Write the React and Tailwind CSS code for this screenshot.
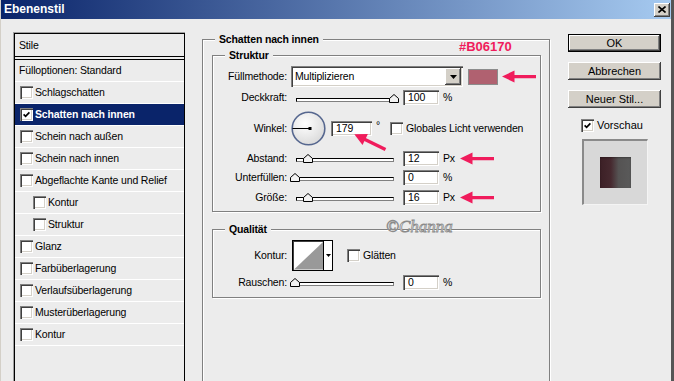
import React from 'react';

const RED = '#f01c5c';
const sunken =
  'shadow-[inset_1px_1px_0_#808080,inset_2px_2px_0_#404040,inset_-1px_-1px_0_#ffffff,inset_-2px_-2px_0_#d4d0c8]';
const raised =
  'shadow-[inset_-1px_-1px_0_#404040,inset_1px_1px_0_#ffffff,inset_-2px_-2px_0_#808080,inset_2px_2px_0_#d4d0c8]';

function Check({ checked = false }) {
  return (
    <span className={`flex h-[13px] w-[13px] shrink-0 items-center justify-center bg-white ${sunken}`}>
      {checked && (
        <svg width="7" height="7" viewBox="0 0 7 7">
          <polyline points="0.6,3.4 2.6,5.4 6.4,1.4" fill="none" stroke="#000" strokeWidth="1.7" />
        </svg>
      )}
    </span>
  );
}

function Field({ value, wide = false }) {
  return (
    <span className={`flex h-[15px] shrink-0 items-center bg-white pl-[5px] ${wide ? 'w-[41px]' : 'w-[36px]'} ${sunken}`}>
      {value}
    </span>
  );
}

function Slider({ pos }) {
  return (
    <span className="relative ml-[4px] block h-[14px] w-[106px] shrink-0">
      <span className="absolute left-[5px] top-[7px] h-[4px] w-[98px] border border-black border-b-[#808080] border-r-[#808080] bg-white" />
      <svg className="absolute top-[3px]" style={{ left: pos - 5 }} width="10" height="9" viewBox="0 0 10 9">
        <path d="M0.5 8.5V4.5L5 0.5L9.5 4.5v4z" fill="#f2f2f2" stroke="#000" />
      </svg>
    </span>
  );
}

function Arrow({ className = '' }) {
  return (
    <svg className={`shrink-0 ${className}`} width="34" height="13" viewBox="0 0 34 13">
      <path d="M0 6.5L12.5 0.5V5H34V8.2H12.5V12.5Z" fill={RED} />
    </svg>
  );
}

function Label({ children }) {
  return <span className="w-[74px] shrink-0 text-right">{children}</span>;
}

function SliderRow({ label, value, unit, pos, arrow = false, mt }) {
  return (
    <div className={`flex h-[14px] items-center ${mt}`}>
      <Label>{label}</Label>
      <Slider pos={pos} />
      <span className="ml-[6px]">
        <Field value={value} />
      </span>
      <span className="ml-[4px] w-[14px]">{unit}</span>
      {arrow && <Arrow className="ml-[3px]" />}
    </div>
  );
}

const styleRows = [
  { name: 'Schlagschatten' },
  { name: 'Schatten nach innen', checked: true, active: true },
  { name: 'Schein nach außen' },
  { name: 'Schein nach innen' },
  { name: 'Abgeflachte Kante und Relief' },
  { name: 'Kontur', sub: true },
  { name: 'Struktur', sub: true },
  { name: 'Glanz' },
  { name: 'Farbüberlagerung' },
  { name: 'Verlaufsüberlagerung' },
  { name: 'Musterüberlagerung' },
  { name: 'Kontur' },
];

const etched = 'border border-[#808080] shadow-[inset_1px_1px_0_#ffffff,1px_1px_0_#ffffff]';

export default function App() {
  return (
    <div className="h-[381px] w-[674px] overflow-hidden border-l border-r-[3px] border-l-[#d4d0c8] border-r-[#555555] bg-[#ececec] font-['Liberation_Sans',Arial,sans-serif] text-[10.5px] leading-[13px] tracking-[-0.15px] text-black">
      {/* title bar */}
      <div className="flex h-[19px] items-center justify-between bg-[linear-gradient(to_right,#0a246a,#a6caf0)] pl-[3px] pr-[1px]">
        <span className="text-[12px] font-bold tracking-normal text-white">Ebenenstil</span>
        <span className={`flex h-[14px] w-[16px] items-center justify-center bg-[#d4d0c8] ${raised}`}>
          <svg width="8" height="7" viewBox="0 0 8 7">
            <path d="M0.5 0.5L7.5 6.5M7.5 0.5L0.5 6.5" stroke="#000" strokeWidth="1.6" />
          </svg>
        </span>
      </div>

      <div className="flex items-start">
        {/* styles list */}
        <div className="ml-[12px] mt-[13px] h-[400px] w-[172px] shrink-0 border-l border-t border-[#a0a0a0]">
          <div className="h-full border-l border-r border-t border-black">
            <div className="flex h-[23px] items-center border-b border-black pl-[4px]">Stile</div>
            <div className="h-[3px] border-b border-black" />
            <div className="flex h-[22px] items-center border-b border-white pl-[4px]">Fülloptionen: Standard</div>
            {styleRows.map((r, i) => (
              <div
                key={i}
                className={`flex h-[22px] items-center gap-[2px] border-b border-white ${r.sub ? 'pl-[18px]' : 'pl-[5px]'} ${
                  r.active ? 'bg-[#0a246a] font-bold text-white' : ''
                }`}
              >
                <Check checked={r.checked} />
                <span>{r.name}</span>
              </div>
            ))}
          </div>
        </div>

        {/* settings */}
        <div className="relative ml-[17px] mt-[14px] w-[348px] shrink-0">
          <fieldset className={`h-[380px] w-[348px] ${etched}`}>
            <legend className="ml-[12px] bg-[#ececec] px-[4px] font-bold leading-[13px]">Schatten nach innen</legend>

            <fieldset className={`ml-[9px] mt-[3px] w-[329px] pb-[7px] pt-[4px] ${etched}`}>
              <legend className="ml-[12px] bg-[#ececec] px-[4px] font-bold leading-[13px]">Struktur</legend>

              <div className="flex h-[21px] items-center">
                <Label>Füllmethode:</Label>
                <span className={`ml-[4px] flex h-[21px] w-[172px] shrink-0 items-center bg-white ${sunken}`}>
                  <span className="flex-1 pl-[4px]">Multiplizieren</span>
                  <span className={`mr-[2px] flex h-[17px] w-[16px] items-center justify-center bg-[#d4d0c8] ${raised}`}>
                    <svg width="7" height="4" viewBox="0 0 7 4">
                      <path d="M0 0h7L3.5 4z" fill="#000" />
                    </svg>
                  </span>
                </span>
                <span className="ml-[5px] h-[16px] w-[30px] shrink-0 border border-[#8c8c8c] bg-[#b06170]" />
                <Arrow className="ml-[4px]" />
              </div>

              <div className="mt-[3px] flex h-[15px] items-center">
                <Label>Deckkraft:</Label>
                <Slider pos={102.5} />
                <span className="ml-[6px]">
                  <Field value="100" />
                </span>
                <span className="ml-[4px]">%</span>
              </div>

              <div className="relative mt-[6px] flex h-[34px] items-center">
                <Label>Winkel:</Label>
                <svg className="ml-[4px] shrink-0" width="35" height="35" viewBox="0 0 35 35">
                  <defs>
                    <radialGradient id="dial" cx="40%" cy="35%" r="70%">
                      <stop offset="0" stopColor="#ffffff" />
                      <stop offset="1" stopColor="#d9d9d9" />
                    </radialGradient>
                  </defs>
                  <circle cx="17.5" cy="17.5" r="16.3" fill="url(#dial)" stroke="#56678f" strokeWidth="1.6" />
                  <line x1="1.5" y1="17.5" x2="19" y2="17.5" stroke="#000" strokeWidth="1" />
                  <rect x="17.5" y="16" width="3" height="3" fill="#000" />
                </svg>
                <span className="ml-[5px]">
                  <Field value="179" wide />
                </span>
                <span className="ml-[4px] self-start pt-[8px]">°</span>
                <span className="ml-[10px]">
                  <Check />
                </span>
                <span className="ml-[3px]">Globales Licht verwenden</span>
                <svg className="absolute left-[138px] top-[19px]" width="40" height="24" viewBox="0 0 40 24">
                  <line x1="13" y1="9" x2="34.5" y2="19.5" stroke={RED} strokeWidth="3.4" />
                  <path d="M3.3 4.3L16.9 4.1L11.5 14.9Z" fill={RED} />
                </svg>
              </div>

              <SliderRow label="Abstand:" value="12" unit="Px" pos={16.5} arrow mt="mt-[6px]" />
              <SliderRow label="Unterfüllen:" value="0" unit="%" pos={4} mt="mt-[5px]" />
              <SliderRow label="Größe:" value="16" unit="Px" pos={16.5} arrow mt="mt-[6px]" />
            </fieldset>

            <fieldset className={`ml-[9px] mt-[11px] w-[329px] pb-[8px] pt-[4px] ${etched}`}>
              <legend className="ml-[12px] bg-[#ececec] px-[4px] font-bold leading-[13px]">Qualität</legend>

              <div className="flex h-[30px] items-center">
                <Label>Kontur:</Label>
                <svg className="ml-[5px] shrink-0" width="41" height="31" viewBox="0 0 41 31">
                  <rect x="0.5" y="0.5" width="40" height="30" fill="#fff" stroke="#000" />
                  <path d="M1 1.5H31M1.5 1V30" stroke="#404040" />
                  <path d="M2 29.5L31 2V29.5Z" fill="#999" />
                  <line x1="31.5" y1="1" x2="31.5" y2="30" stroke="#000" />
                  <path d="M34 14h5l-2.5 3z" fill="#000" />
                </svg>
                <span className="ml-[14px]">
                  <Check />
                </span>
                <span className="ml-[3px]">Glätten</span>
              </div>

              <SliderRow label="Rauschen:" value="0" unit="%" pos={4} mt="mt-[5px]" />
            </fieldset>
          </fieldset>

          <span className="absolute left-[257px] top-[6px] text-[13px] font-bold leading-[16px] tracking-normal text-[#f01c5c]">#B06170</span>
          <span className="absolute left-[184px] top-[185px] font-['Liberation_Serif',serif] text-[17px] italic leading-[18px] tracking-normal text-[#f2f2f2] [-webkit-text-stroke:0.8px_#8a8a8a]">
            ©Channa
          </span>
        </div>

        {/* buttons */}
        <div className="ml-[18px] mt-[15px] flex w-[93px] shrink-0 flex-col text-[11px] tracking-normal">
          <button className={`flex h-[18px] w-[93px] items-center justify-center border border-black bg-[#d4d0c8] ${raised}`}>OK</button>
          <button className={`mt-[10px] flex h-[18px] w-[93px] items-center justify-center bg-[#d4d0c8] ${raised}`}>Abbrechen</button>
          <button className={`mt-[10px] flex h-[18px] w-[93px] items-center justify-center bg-[#d4d0c8] ${raised}`}>Neuer Stil...</button>
          <div className="ml-[13px] mt-[11px] flex items-center gap-[3px]">
            <Check checked />
            <span>Vorschau</span>
          </div>
          <div className="ml-[14px] mt-[7px] flex h-[66px] w-[66px] items-center justify-center border-b border-l-2 border-r border-t-2 border-b-[#f4f4f4] border-l-[#8a8a8a] border-r-[#f4f4f4] border-t-[#8a8a8a] bg-[#d8d8d8]">
            <span className="h-[31px] w-[31px] bg-[linear-gradient(to_right,#3c2026,#46292f_35%,#555353_60%,#5a5a5a)] shadow-[inset_0_1px_2px_rgba(0,0,0,0.3)]" />
          </div>
        </div>
      </div>
    </div>
  );
}
